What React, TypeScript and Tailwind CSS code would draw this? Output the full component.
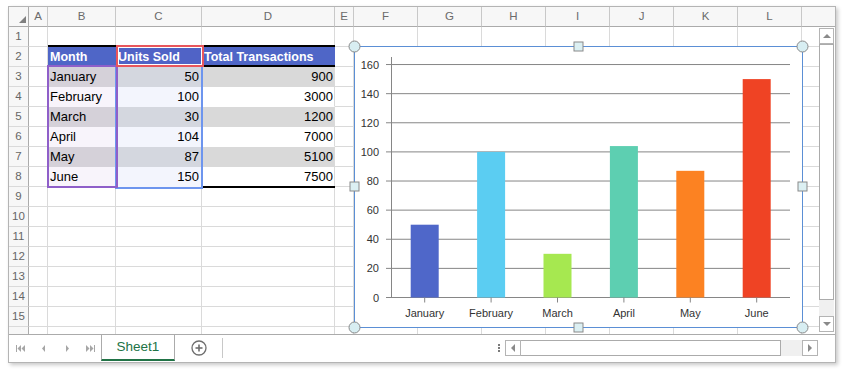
import React from 'react';

type DataRow = { month: string; units: number; tx: number };

const data: DataRow[] = [
  { month: 'January', units: 50, tx: 900 },
  { month: 'February', units: 100, tx: 3000 },
  { month: 'March', units: 30, tx: 1200 },
  { month: 'April', units: 104, tx: 7000 },
  { month: 'May', units: 87, tx: 5100 },
  { month: 'June', units: 150, tx: 7500 },
];

const barColors = ['#4f67c9', '#5bcdf2', '#a6e850', '#5dcfb1', '#fc8222', '#ef4324'];

const columns: Array<{ id: string; w: string }> = [
  { id: 'A', w: 'w-[19px]' },
  { id: 'B', w: 'w-[68px]' },
  { id: 'C', w: 'w-[86px]' },
  { id: 'D', w: 'w-[133px]' },
  { id: 'E', w: 'w-[19px]' },
  { id: 'F', w: 'w-[64px]' },
  { id: 'G', w: 'w-[64px]' },
  { id: 'H', w: 'w-[64px]' },
  { id: 'I', w: 'w-[64px]' },
  { id: 'J', w: 'w-[64px]' },
  { id: 'K', w: 'w-[64px]' },
  { id: 'L', w: 'w-[64px]' },
];

const font = "font-['Liberation_Sans',Arial,sans-serif]";

// one sheet cell, with the table's fill / text where row 2..8 and columns B..D
const SheetCell: React.FC<{ row: number; col: string; w: string }> = ({ row, col, w }) => {
  const inTable = row >= 2 && row <= 8 && (col === 'B' || col === 'C' || col === 'D');
  if (!inTable) {
    return <div className={`${w} h-[20px] shrink-0 border-r border-b border-[#dadada]`} />;
  }

  if (row === 2) {
    const label = col === 'B' ? 'Month' : col === 'C' ? 'Units Sold' : 'Total Transactions';
    const bg = col === 'C' ? 'bg-[#5063c6]' : 'bg-[#4f66c7]';
    return (
      <div className={`${w} h-[20px] shrink-0 border-b border-r border-transparent ${bg} flex items-center pl-[2px] pt-[2px] text-white font-bold text-[12.5px] whitespace-nowrap overflow-visible`}>
        {label}
      </div>
    );
  }

  const item = data[row - 3];
  const shaded = row % 2 === 1;
  if (col === 'B') {
    return (
      <div className={`${w} h-[20px] shrink-0 border-b border-r border-transparent ${shaded ? 'bg-[#d5d1d9]' : 'bg-[#f8f4fb]'} flex items-center pl-[2px] pt-[1px] text-[13px] text-black`}>
        {item.month}
      </div>
    );
  }
  if (col === 'C') {
    return (
      <div className={`${w} h-[20px] shrink-0 border-b border-r border-transparent ${shaded ? 'bg-[#d4d7df]' : 'bg-[#f3f5fd]'} flex items-center justify-end pr-[2px] pt-[1px] text-[13px] text-black`}>
        {item.units}
      </div>
    );
  }
  return (
    <div className={`${w} h-[20px] shrink-0 border-b border-b-transparent border-r border-r-[#dadada] ${shaded ? 'bg-[#d9d9d9]' : 'bg-white'} flex items-center justify-end pr-[1px] pt-[1px] text-[13px] text-black`}>
      {item.tx}
    </div>
  );
};

const SheetRow: React.FC<{ row: number; label?: boolean }> = ({ row, label = true }) => (
  <div className="flex h-[20px] shrink-0">
    <div className="w-[20px] h-[20px] shrink-0 border-r border-r-[#ababab] border-b border-b-[#dadada] bg-[#f7f7f7] flex items-center justify-center pt-[1px] text-[11.5px] text-[#666]">
      {label ? row : null}
    </div>
    {columns.map(c => (
      <SheetCell key={c.id} row={row} col={c.id} w={c.w} />
    ))}
    <div className="w-[17px] h-[20px] shrink-0 border-b border-[#dadada]" />
  </div>
);

const Chart: React.FC = () => {
  const axisX = 37.5;
  const baseY = 251.5;
  const scale = 1.456;
  const step = 66.4;
  const ticks = [0, 20, 40, 60, 80, 100, 120, 140, 160];

  return (
    <svg width={449} height={282} className="overflow-visible">
      <rect x={0.5} y={0.5} width={448} height={281} fill="white" stroke="#5b8fd5" />

      {ticks.map(t => {
        const y = baseY - t * scale;
        return (
          <g key={t}>
            <line x1={32} x2={436} y1={y} y2={y} stroke="#868686" strokeWidth={1} />
            <text x={25} y={y + 4} textAnchor="end" fontSize={11} fill="#333" fontFamily="Liberation Sans, Arial, sans-serif">
              {t}
            </text>
          </g>
        );
      })}
      <line x1={axisX} x2={axisX} y1={11} y2={baseY} stroke="#868686" />

      {data.map((d, i) => {
        const cx = axisX + step / 2 + i * step;
        const h = d.units * scale;
        return (
          <g key={d.month}>
            <rect x={cx - 14} y={baseY - h} width={28} height={h} fill={barColors[i]} />
            <line x1={cx} x2={cx} y1={baseY} y2={baseY + 5} stroke="#868686" />
            <text x={cx} y={271} textAnchor="middle" fontSize={11} fill="#333" fontFamily="Liberation Sans, Arial, sans-serif">
              {d.month}
            </text>
          </g>
        );
      })}

      {/* selection handles */}
      {[
        [0.5, 0.5],
        [448.5, 0.5],
        [0.5, 281.5],
        [448.5, 281.5],
      ].map(([x, y]) => (
        <circle key={`c${x}-${y}`} cx={x} cy={y} r={5.5} fill="#d8eef2" stroke="#8a8a8a" />
      ))}
      {[
        [224.5, 0.5],
        [0.5, 140.5],
        [448.5, 140.5],
        [224.5, 281.5],
      ].map(([x, y]) => (
        <rect key={`s${x}-${y}`} x={x - 4.5} y={y - 4.5} width={9} height={9} fill="#dcf0f3" stroke="#8a8a8a" />
      ))}
    </svg>
  );
};

const Arrow: React.FC<{ dir: 'up' | 'down' | 'left' | 'right' }> = ({ dir }) => {
  const pts =
    dir === 'up' ? '0,4 4,0 8,4' : dir === 'down' ? '0,0 8,0 4,4' : dir === 'left' ? '4,0 4,8 0,4' : '0,0 0,8 4,4';
  const w = dir === 'up' || dir === 'down' ? 8 : 4;
  const h = dir === 'up' || dir === 'down' ? 4 : 8;
  return (
    <svg width={w} height={h}>
      <polygon points={pts} fill="#8a8a8a" />
    </svg>
  );
};

const NavIcon: React.FC<{ kind: 'first' | 'prev' | 'next' | 'last' }> = ({ kind }) => (
  <svg width={10} height={7} viewBox="0 0 10 7">
    {kind === 'first' && (
      <g fill="#a6a6a6">
        <rect x={0} y={0} width={1} height={7} />
        <polygon points="5,0 5,7 1.5,3.5" />
        <polygon points="9,0 9,7 5.5,3.5" />
      </g>
    )}
    {kind === 'prev' && <polygon points="6,0 6,7 3,3.5" fill="#a6a6a6" />}
    {kind === 'next' && <polygon points="4,0 4,7 7,3.5" fill="#a6a6a6" />}
    {kind === 'last' && (
      <g fill="#a6a6a6">
        <polygon points="1,0 1,7 4.5,3.5" />
        <polygon points="5,0 5,7 8.5,3.5" />
        <rect x={9} y={0} width={1} height={7} />
      </g>
    )}
  </svg>
);

export default function App() {
  const bodyRows = Array.from({ length: 15 }, (_, i) => i + 1);

  return (
    <div className={`w-[845px] h-[374px] bg-white pt-[6px] pl-[8px] ${font}`}>
      <div className="w-[828px] h-[357px] border border-[#b4b4b4] bg-white flex flex-col shadow-[2px_2px_4px_rgba(0,0,0,0.22)]">
        {/* column headers */}
        <div className="flex h-[20px] shrink-0">
          <div className="w-[20px] h-[20px] shrink-0 border-r border-b border-[#ababab] bg-[#f7f7f7] flex items-end justify-end pr-[2px] pb-[3px]">
            <svg width={7} height={7}>
              <polygon points="7,0 7,7 0,7" fill="#7f7f7f" />
            </svg>
          </div>
          {columns.map(c => (
            <div
              key={c.id}
              className={`${c.w} h-[20px] shrink-0 border-r border-r-[#c8c8c8] border-b border-b-[#ababab] bg-[#f7f7f7] flex items-center justify-center text-[11.5px] text-[#6b6b6b]`}
            >
              {c.id}
            </div>
          ))}
          <div className="flex-1 h-[20px] border-b border-[#ababab] bg-[#f7f7f7]" />
        </div>

        {/* cells + vertical scrollbar */}
        <div className="flex h-[307px] shrink-0">
          <div className="relative w-[810px] h-[307px] overflow-hidden">
            {bodyRows.map(r => (
              <SheetRow key={r} row={r} />
            ))}
            <div className="h-[7px] overflow-hidden">
              <SheetRow row={16} label={false} />
            </div>

            {/* table borders */}
            <div className="absolute left-[39px] top-[18px] w-[287px] h-[2px] bg-black" />
            <div className="absolute left-[39px] top-[38px] w-[287px] h-[2px] bg-black" />
            <div className="absolute left-[194px] top-[159px] w-[132px] h-[2px] bg-black" />

            {/* selection ranges */}
            <div className="absolute left-[106px] top-[38px] w-[88px] h-[124px] border-2 border-[#6d95ee]" />
            <div className="absolute left-[38px] top-[38px] w-[71px] h-[123px] border-2 border-[#8f5fc9]" />
            <div className="absolute left-[107px] top-[18px] w-[88px] h-[22px] border-2 border-[#e9565c] shadow-[inset_0_0_0_1px_white]" />

            {/* embedded chart */}
            <div className="absolute left-[345px] top-[19px]">
              <Chart />
            </div>
          </div>

          <div className="w-[16px] h-[307px] flex flex-col bg-white pt-[1px] pb-[2px] pr-[1px]">
            <div className="h-[16px] border border-[#b4b4b4] bg-white flex items-center justify-center">
              <Arrow dir="up" />
            </div>
            <div className="h-[256px] border border-[#ababab] bg-white" />
            <div className="flex-1 bg-[#f0f0f0]" />
            <div className="h-[16px] border border-[#b4b4b4] bg-white flex items-center justify-center">
              <Arrow dir="down" />
            </div>
          </div>
        </div>

        {/* sheet tabs bar */}
        <div className="flex items-start h-[28px] shrink-0 border-t border-[#ababab] bg-white">
          <div className="flex w-[92px] h-[26px] items-center">
            <div className="w-[23px] flex justify-center"><NavIcon kind="first" /></div>
            <div className="w-[23px] flex justify-center"><NavIcon kind="prev" /></div>
            <div className="w-[23px] flex justify-center"><NavIcon kind="next" /></div>
            <div className="w-[23px] flex justify-center"><NavIcon kind="last" /></div>
          </div>
          <div className="w-[74px] h-[26px] border-l border-r border-[#ababab] border-b-2 border-b-[#217346] flex items-center justify-center pt-[1px] text-[13.5px] text-[#217346]">
            Sheet1
          </div>
          <div className="w-[47px] h-[26px] flex items-center justify-center">
            <svg width={16} height={16} viewBox="0 0 16 16">
              <circle cx={8} cy={8} r={7} fill="none" stroke="#6e6e6e" strokeWidth={1.3} />
              <line x1={4.5} x2={11.5} y1={8} y2={8} stroke="#6e6e6e" strokeWidth={1.6} />
              <line x1={8} x2={8} y1={4.5} y2={11.5} stroke="#6e6e6e" strokeWidth={1.6} />
            </svg>
          </div>
          <div className="w-[1px] h-[20px] mt-[3px] bg-[#c8c8c8]" />
          <div className="flex-1" />
          <div className="flex h-[26px] items-center pr-[17px]">
            <div className="flex flex-col gap-[1px] mr-[5px]">
              <div className="w-[2px] h-[2px] bg-[#7a7a7a]" />
              <div className="w-[2px] h-[2px] bg-[#7a7a7a]" />
              <div className="w-[2px] h-[2px] bg-[#7a7a7a]" />
            </div>
            <div className="flex h-[16px]">
              <div className="w-[16px] h-[16px] border border-[#b4b4b4] bg-white flex items-center justify-center">
                <Arrow dir="left" />
              </div>
              <div className="w-[260px] h-[16px] border border-[#ababab] border-l-0 bg-white" />
              <div className="w-[21px] h-[16px] bg-[#f0f0f0]" />
              <div className="w-[16px] h-[16px] border border-[#b4b4b4] bg-white flex items-center justify-center">
                <Arrow dir="right" />
              </div>
            </div>
          </div>
        </div>
      </div>
    </div>
  );
}
